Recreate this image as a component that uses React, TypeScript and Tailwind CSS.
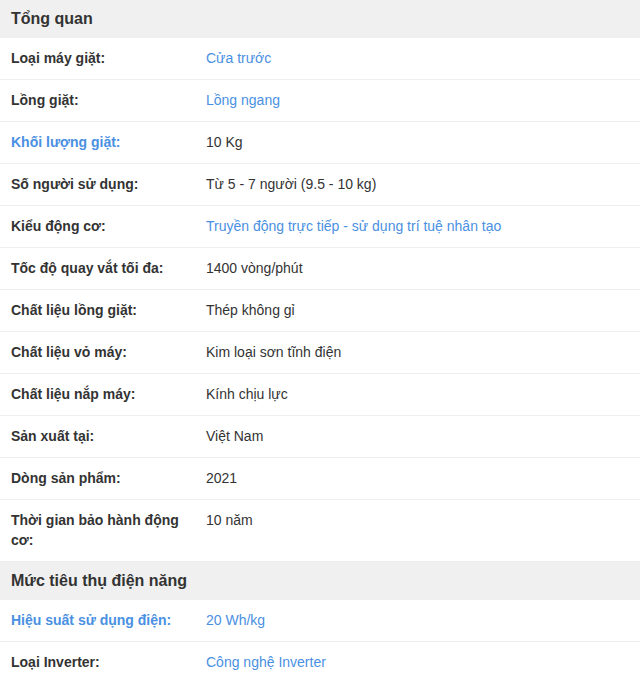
import { FC } from "react";

type Spec = { label: string; value: string; labelLink?: boolean; valueLink?: boolean };

const overview: Spec[] = [
  { label: "Loại máy giặt:", value: "Cửa trước", valueLink: true },
  { label: "Lồng giặt:", value: "Lồng ngang", valueLink: true },
  { label: "Khối lượng giặt:", value: "10 Kg", labelLink: true },
  { label: "Số người sử dụng:", value: "Từ 5 - 7 người (9.5 - 10 kg)" },
  { label: "Kiểu động cơ:", value: "Truyền động trực tiếp - sử dụng trí tuệ nhân tạo", valueLink: true },
  { label: "Tốc độ quay vắt tối đa:", value: "1400 vòng/phút" },
  { label: "Chất liệu lồng giặt:", value: "Thép không gỉ" },
  { label: "Chất liệu vỏ máy:", value: "Kim loại sơn tĩnh điện" },
  { label: "Chất liệu nắp máy:", value: "Kính chịu lực" },
  { label: "Sản xuất tại:", value: "Việt Nam" },
  { label: "Dòng sản phẩm:", value: "2021" },
  { label: "Thời gian bảo hành động cơ:", value: "10 năm" },
];

const power: Spec[] = [
  { label: "Hiệu suất sử dụng điện:", value: "20 Wh/kg", labelLink: true, valueLink: true },
  { label: "Loại Inverter:", value: "Công nghệ Inverter", valueLink: true },
];

const SpecRow: FC<Spec> = ({ label, value, labelLink, valueLink }) => (
  <div className="flex border-b border-[#eeeeee] text-[14px] leading-[20px]">
    <div
      className={`w-[196px] shrink-0 pl-[11px] pr-[10px] pt-[10px] pb-[11px] font-bold ${
        labelLink ? "text-[#4a90e2]" : "text-[#333333]"
      }`}
    >
      {label}
    </div>
    <div className={`flex-1 pl-[10px] pt-[10px] pb-[11px] ${valueLink ? "text-[#4a90e2]" : "text-[#333333]"}`}>
      {value}
    </div>
  </div>
);

const Section: FC<{ title: string; rows: Spec[] }> = ({ title, rows }) => (
  <div>
    <h3 className="bg-[#f0f0f0] h-[38px] flex items-center pl-[11px] text-[16px] font-bold text-[#333333]">
      {title}
    </h3>
    {rows.map((r) => (
      <SpecRow key={r.label} {...r} />
    ))}
  </div>
);

export default function App() {
  return (
    <div className="w-[640px] h-[683px] overflow-hidden bg-white font-['Liberation_Sans',Arial,sans-serif]">
      <Section title="Tổng quan" rows={overview} />
      <Section title="Mức tiêu thụ điện năng" rows={power} />
    </div>
  );
}
